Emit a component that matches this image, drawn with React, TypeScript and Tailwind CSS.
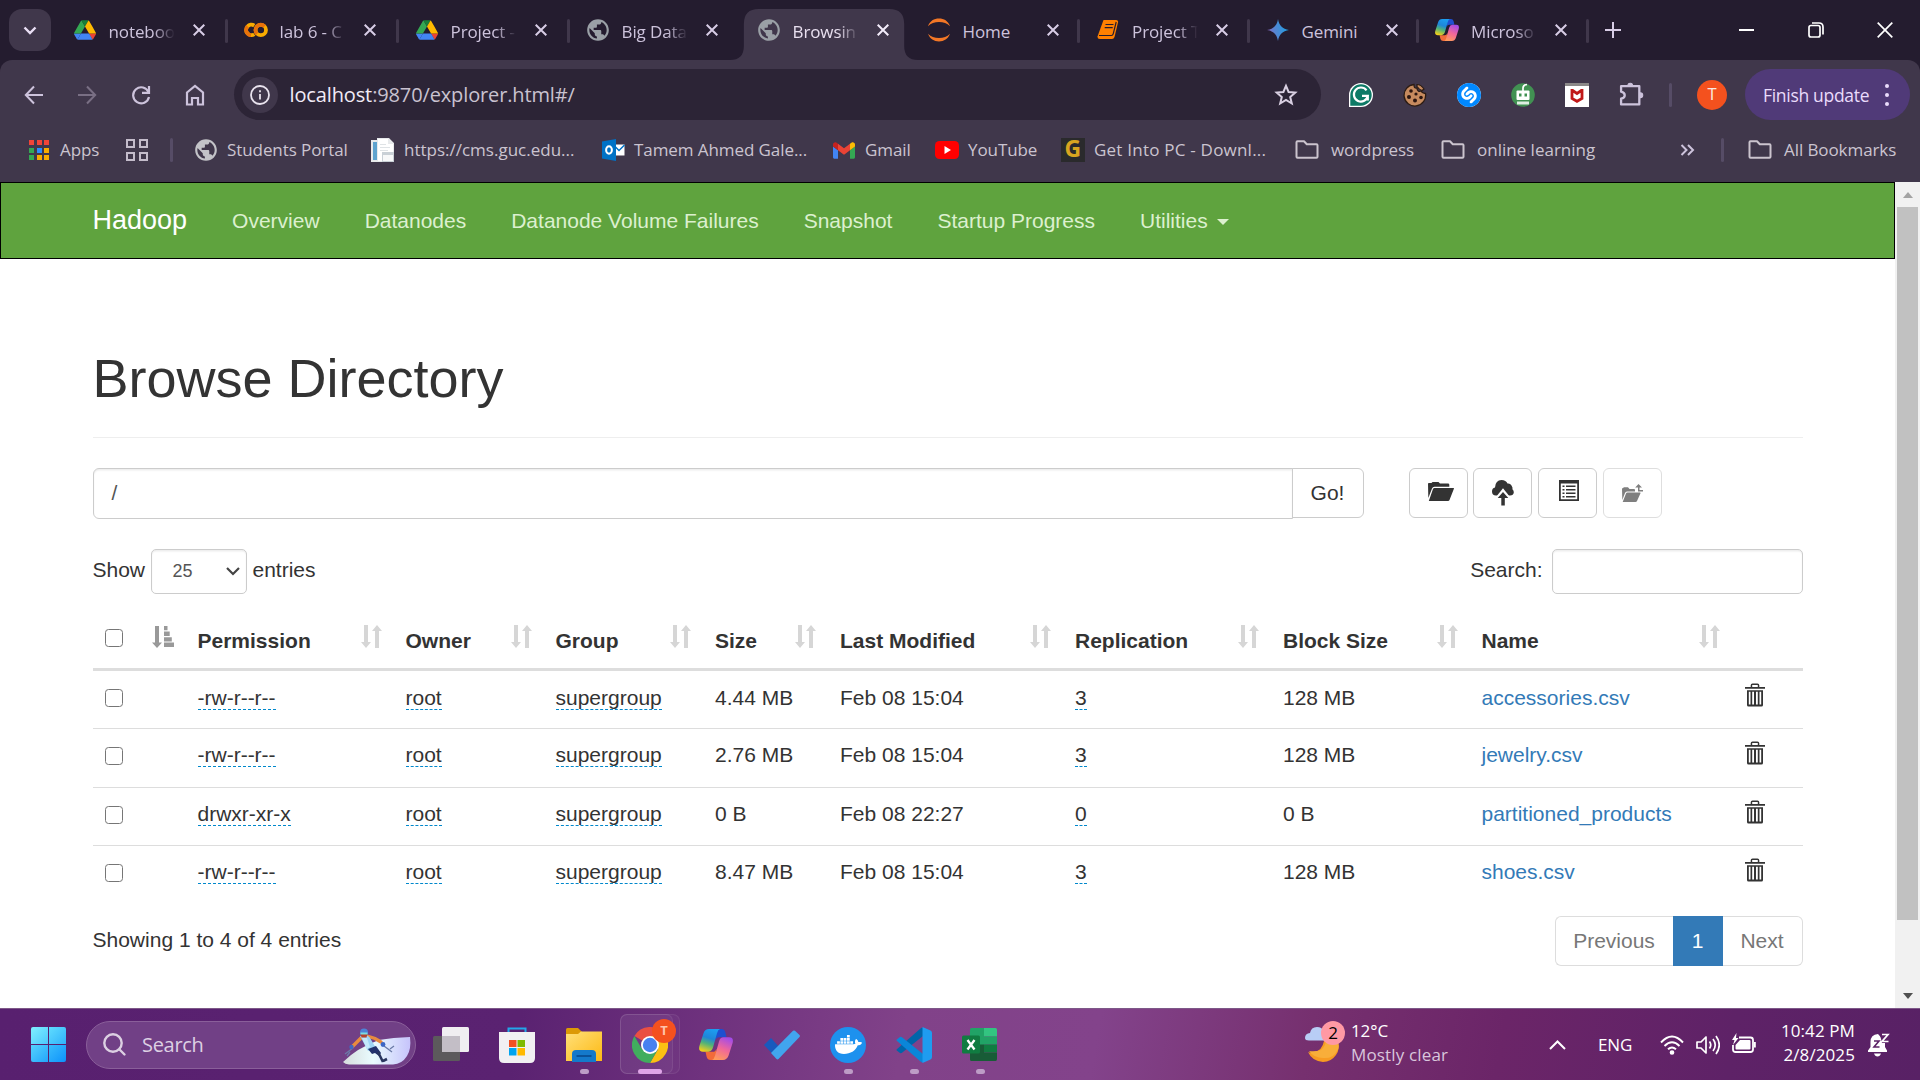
import React from "react";
import { MdPublic } from "react-icons/md";
import { FaDocker } from "react-icons/fa";
import { SiShazam } from "react-icons/si";

/* ---------- logos ---------- */

const Drive = () => (
  <svg viewBox="0 0 87.3 78" className="h-[20px] w-[22px]">
    <path fill="#4285f4" d="m6.6 66.85 3.85 6.65c.8 1.4 1.95 2.5 3.3 3.3l13.75-23.8h-27.5c0 1.55.4 3.1 1.2 4.5z" />
    <path fill="#34a853" d="m43.65 25-13.75-23.8c-1.35.8-2.5 1.9-3.3 3.3l-25.4 44a9.06 9.06 0 0 0 -1.2 4.5h27.5z" />
    <path fill="#ea4335" d="m73.55 76.8c1.35-.8 2.5-1.9 3.3-3.3l1.6-2.75 7.65-13.25c.8-1.4 1.2-2.95 1.2-4.5h-27.502l5.852 11.5z" />
    <path fill="#188038" d="m43.65 25 13.75-23.8c-1.35-.8-2.9-1.2-4.5-1.2h-18.5c-1.6 0-3.15.45-4.5 1.2z" />
    <path fill="#4285f4" d="m59.8 53h-32.3l-13.75 23.8c1.35.8 2.9 1.2 4.5 1.2h50.8c1.6 0 3.15-.45 4.5-1.2z" />
    <path fill="#ffba00" d="m73.4 26.5-12.7-22c-.8-1.4-1.95-2.5-3.3-3.3l-13.75 23.8 16.15 28h27.45c0-1.55-.4-3.1-1.2-4.5z" />
  </svg>
);

const Colab = () => (
  <svg viewBox="0 0 24 16" className="h-[16px] w-[24px]" fill="none" strokeWidth="3.8">
    <path stroke="#f9ab00" d="M10.3 3.6A5.2 5.2 0 1 0 10.3 12.2" />
    <path stroke="#e8710a" d="M3.6 4.4A5.2 5.2 0 0 0 7 13.2" />
    <circle stroke="#f9ab00" cx="16.8" cy="8" r="5.2" />
    <path stroke="#e8710a" d="M13 11.8A5.2 5.2 0 0 1 20.5 4.3" />
  </svg>
);

const Globe = ({ className }: { className: string }) => <MdPublic className={className} />;

const Jupyter = () => (
  <svg viewBox="0 0 24 24" className="h-[26px] w-[24px]" fill="#f37726">
    <path d="M1 8.2C3 3 7 .6 12 .6S21 3 23 8.2C20 5.2 16.5 4 12 4S4 5.2 1 8.2Z" />
    <path d="M1 15.8C3 21 7 23.4 12 23.4S21 21 23 15.8C20 18.8 16.5 20 12 20S4 18.8 1 15.8Z" />
  </svg>
);

const Book = () => (
  <svg viewBox="0 0 22 20" className="h-[20px] w-[22px]">
    <path fill="#ff8000" d="M6.5 0H19q2.5 0 2 2.5L17.5 17q-.6 2-2.5 2H3Q.5 19 .5 16.5Z" />
    <path fill="none" stroke="#241c2f" strokeWidth="1.2" d="M8.5 4.5h8M7.7 7.7h8M2 15.5h12.5q1.3 0 1.7-1.6L19.2 2" />
  </svg>
);

const Gemini = () => (
  <svg viewBox="0 0 24 24" className="h-[22px] w-[22px]">
    <defs>
      <linearGradient id="gem" x1="0" y1=".6" x2="1" y2=".4">
        <stop offset="0" stopColor="#9168c0" />
        <stop offset=".35" stopColor="#5684d1" />
        <stop offset="1" stopColor="#1ba1e3" />
      </linearGradient>
    </defs>
    <path fill="url(#gem)" d="M12 0C13 7 17 11 24 12 17 13 13 17 12 24 11 17 7 13 0 12 7 11 11 7 12 0Z" />
  </svg>
);

const Copilot = ({ className, id }: { className: string; id: string }) => (
  <svg viewBox="0 0 34 30" preserveAspectRatio="none" className={className}>
    <defs>
      <linearGradient id={id + "a"} x1=".6" y1="0" x2=".3" y2="1">
        <stop offset="0" stopColor="#1c9df0" />
        <stop offset=".4" stopColor="#1f86d8" />
        <stop offset=".65" stopColor="#4fb27a" />
        <stop offset="1" stopColor="#f2cf1b" />
      </linearGradient>
      <linearGradient id={id + "b"} x1=".7" y1="0" x2=".3" y2="1">
        <stop offset="0" stopColor="#a34be8" />
        <stop offset=".5" stopColor="#f0679a" />
        <stop offset="1" stopColor="#ff9a5c" />
      </linearGradient>
    </defs>
    <path fill="#1f4fd0" d="M17 0h5.5q3 0 3.8 2.8L27.5 8H20q-2.5 0-3.5 3Z" />
    <path fill="#f26b3a" d="M17 30h-5.5q-3 0-3.8-2.8L6.5 22H14q2.5 0 3.5-3Z" />
    <path fill={"url(#" + id + "a)"} d="M10 0h11q-2 .5-3 4l-4 14q-1.2 4-4.5 4H4q-5 0-3.6-5.5L4.5 4Q6 0 10 0Z" />
    <path fill={"url(#" + id + "b)"} d="M24 30H13q2-.5 3-4l4-14q1.2-4 4.5-4H30q5 0 3.6 5.5L29.5 26Q28 30 24 30Z" />
  </svg>
);

const Gmail = () => (
  <svg viewBox="52 42 88 66" className="h-[17px] w-[22px]">
    <path fill="#4285f4" d="M58 108h14V74L52 59v43c0 3.320 2.690 6 6 6" />
    <path fill="#34a853" d="M120 108h14c3.320 0 6-2.690 6-6V59l-20 15" />
    <path fill="#fbbc04" d="M120 48v26l20-15v-8c0-7.420-8.470-11.650-14.400-7.200" />
    <path fill="#ea4335" d="M72 74V48l24 18 24-18v26L96 92" />
    <path fill="#c5221f" d="M52 51v8l20 15V48l-5.600-4.200c-5.940-4.450-14.400-.22-14.400 7.200" />
  </svg>
);

const Outlook = () => (
  <svg viewBox="0 0 23 22" className="h-[22px] w-[23px]">
    <path fill="#fff" d="M12 5.5h10.5v11H12z" />
    <path fill="none" stroke="#0072c6" strokeWidth="1.5" d="m13 7.5 4 4 5.5-5.5" />
    <path fill="#0072c6" d="M0 2.5 14 0v22L0 19.5Z" />
    <ellipse cx="7" cy="11" rx="2.9" ry="3.7" fill="none" stroke="#fff" strokeWidth="2" />
  </svg>
);

const DocPage = () => (
  <svg viewBox="0 0 24 24" className="h-[24px] w-[24px]">
    <path fill="#e8eaec" d="M0 2h6V0h12l5 5v19H0Z" />
    <path fill="#5ea3cf" d="M2 4h4v18H2z" />
    <path fill="#fff" d="M7 1h10v5h5v17H7Z" />
    <path fill="#dfe3e6" d="M9 6h6v1H9zM9 9h10v1H9zM9 12h8v1H9z" />
    <path fill="#c9d0d6" d="M11 14h12v10H11z" />
    <path fill="#f7f8f9" d="M12 17h10v6H12z" />
  </svg>
);

const Folder = () => (
  <svg viewBox="0 0 24 20" className="h-[20px] w-[24px]" fill="none" stroke="#cbc4ce" strokeWidth="2" strokeLinejoin="round">
    <path d="M1.5 2.2q0-1 1-1H9l2.8 3h9.7q1 0 1 1v11.6q0 1-1 1h-19q-1 0-1-1Z" />
  </svg>
);

/* ---------- tab strip ---------- */

type TabInfo = { icon: React.ReactNode; title: string; width: string; active?: boolean; sep?: boolean; fade?: boolean };

const tabs: TabInfo[] = [
  { icon: <Drive />, title: "noteboo", width: "w-[171px]", sep: true, fade: true },
  { icon: <Colab />, title: "lab 6 - C", width: "w-[171px]", sep: true, fade: true },
  { icon: <Drive />, title: "Project -", width: "w-[171px]", sep: true, fade: true },
  { icon: <Globe className="h-[26px] w-[26px] text-[#9aa0a6]" />, title: "Big Data", width: "w-[171px]", fade: true },
  { icon: <Globe className="h-[26px] w-[26px] text-[#9aa0a6]" />, title: "Browsin", width: "w-[170px]", active: true, fade: true },
  { icon: <Jupyter />, title: "Home", width: "w-[169.5px]", sep: true },
  { icon: <Book />, title: "Project T", width: "w-[169.5px]", sep: true, fade: true },
  { icon: <Gemini />, title: "Gemini", width: "w-[169.5px]", sep: true },
  { icon: <Copilot className="h-[22px] w-[24px]" id="ct" />, title: "Microso", width: "w-[170px]", sep: true, fade: true },
];

const Close = ({ color }: { color: string }) => (
  <svg viewBox="0 0 12 12" className="h-[12px] w-[12px]" fill="none" stroke={color} strokeWidth="2">
    <path d="M.7.7l10.6 10.6M11.3.7.7 11.3" />
  </svg>
);

function Tab({ t }: { t: TabInfo }) {
  return (
    <div className={"relative flex h-[60px] shrink-0 items-start pt-[9px] " + t.width}>
      {t.active && (
        <svg viewBox="0 0 194 51" className="absolute top-[9px] left-[-11.5px] h-[51px] w-[192px]" preserveAspectRatio="none" fill="#40374b">
          <path d="M0 51Q14 51 14 37V15Q14 0 29 0H161Q176 0 176 15V37Q176 51 190 51Z" />
        </svg>
      )}
      <div className="relative flex h-[42px] w-full items-center pl-[14px]">
        <div className="flex w-[26px] justify-center">{t.icon}</div>
        <div
          className={
            "ml-[11px] w-[70px] pt-[3px] text-[17px] tracking-[-0.1px] whitespace-nowrap " +
            (t.active ? "text-[#e9e0f0]" : "text-[#cdc3dc]") +
            (t.fade ? " [mask-image:linear-gradient(to_right,black_64%,transparent_94%)]" : "")
          }
        >
          {t.title}
        </div>
        <div className="ml-[14px]">
          <Close color={t.active ? "#f3ecfa" : "#d8cde6"} />
        </div>
        {t.sep && <div className="absolute top-[10px] right-[1px] h-[24px] w-[3px] rounded bg-[#40374b]" />}
      </div>
    </div>
  );
}

function TabStrip() {
  return (
    <div className="flex h-[60px] bg-[#241c2f]">
      <div className="mt-[9px] ml-[9px] flex h-[42px] w-[42px] items-center justify-center rounded-[13px] bg-[#40374b]">
        <svg viewBox="0 0 14 9" className="h-[9px] w-[14px]" fill="none" stroke="#eadff5" strokeWidth="2.4">
          <path d="m1.5 1.5 5.5 5.5 5.5-5.5" />
        </svg>
      </div>
      <div className="ml-[6.5px] flex">
        {tabs.map((t, i) => (
          <Tab key={i} t={t} />
        ))}
      </div>
      <svg viewBox="0 0 16 16" className="mt-[22px] ml-[15px] h-[16px] w-[16px]" stroke="#d8cde6" strokeWidth="2">
        <path d="M8 0v16M0 8h16" />
      </svg>
      <div className="ml-auto flex w-[208px] items-center">
        <div className="flex w-[69px] justify-center">
          <div className="h-[2px] w-[15px] bg-white" />
        </div>
        <div className="flex w-[69px] justify-center">
          <svg viewBox="0 0 16 16" className="h-[16px] w-[16px]" fill="none" stroke="#fff" strokeWidth="1.7">
            <rect x="1" y="3.5" width="11" height="11.5" rx="2" />
            <path d="M4 1h7q4 0 4 4v7.5" />
          </svg>
        </div>
        <div className="flex w-[69px] justify-center">
          <svg viewBox="0 0 16 16" className="h-[16px] w-[16px]" stroke="#fff" strokeWidth="1.7">
            <path d="M.7.7l14.6 14.6M15.3.7.7 15.3" />
          </svg>
        </div>
      </div>
    </div>
  );
}

/* ---------- toolbar ---------- */

const Slot = ({ children }: { children: React.ReactNode }) => (
  <div className="flex w-[54px] shrink-0 items-center justify-center">{children}</div>
);

function Toolbar() {
  return (
    <div className="bg-[#241c2f]">
      <div className="flex h-[69px] items-center rounded-t-[12px] bg-[#40374b] pl-[7px]">
        <Slot>
          <svg viewBox="0 0 20 20" className="h-[20px] w-[20px]" fill="none" stroke="#cdc3dc" strokeWidth="2">
            <path d="M19 10H2M10 1.5 1.8 10l8.2 8.5" />
          </svg>
        </Slot>
        <Slot>
          <svg viewBox="0 0 20 20" className="mr-[2px] h-[20px] w-[20px]" fill="none" stroke="#796f84" strokeWidth="2">
            <path d="M1 10h17M10 1.5l8.2 8.5-8.2 8.5" />
          </svg>
        </Slot>
        <Slot>
          <svg viewBox="0 0 20 20" className="mr-[2px] h-[20px] w-[20px]" fill="none" stroke="#cdc3dc" strokeWidth="2.2">
            <path d="M17.6 7.3A8 8 0 1 0 18 12" />
            <path d="M18 1v6.8h-7" />
          </svg>
        </Slot>
        <Slot>
          <svg viewBox="0 0 20 22" className="mr-[2px] h-[22px] w-[20px]" fill="none" stroke="#cdc3dc" strokeWidth="2.2">
            <path d="M2 8.5 10 2l8 6.5v12h-5V14H7v6.5H2Z" />
          </svg>
        </Slot>
        <div className="ml-[11px] flex h-[51px] w-[1087px] shrink-0 items-center rounded-full bg-[#2c2436] pl-[8px]">
          <div className="flex h-[36px] w-[36px] items-center justify-center rounded-full bg-[#40374b]">
            <svg viewBox="0 0 20 20" className="h-[20px] w-[20px]" fill="none" stroke="#e9e3ee" strokeWidth="1.8">
              <circle cx="10" cy="10" r="9" />
              <path d="M10 9v5.5M10 5.2v2" />
            </svg>
          </div>
          <div className="ml-[11.5px] text-[20px] tracking-[-0.13px] text-[#c9c2d0]">
            <span className="text-[#f1ebf6]">localhost</span>:9870/explorer.html#/
          </div>
          <svg viewBox="0 0 24 24" className="mr-[23px] ml-auto h-[24px] w-[24px]" fill="none" stroke="#d9d0e2" strokeWidth="2" strokeLinejoin="miter">
            <path d="m12 2.8 2.6 6.2 6.7.6-5.1 4.4 1.6 6.5-5.8-3.5-5.8 3.5 1.6-6.5L2.7 9.6l6.7-.6Z" />
          </svg>
        </div>
        <div className="ml-[13px] flex">
          <Slot>
            <svg viewBox="0 0 24 24" className="h-[24px] w-[24px]">
              <path d="M12 0a12 12 0 0 1 0 24H0V12A12 12 0 0 1 12 0Z" fill="#fff" />
              <path d="M12 1.3a10.7 10.7 0 0 1 0 21.4H1.3V12A10.7 10.7 0 0 1 12 1.3Z" fill="#0d7a66" />
              <path d="M17.5 7.3A7 7 0 1 0 18.8 12.8H13M18.8 12.5v5" fill="none" stroke="#fff" strokeWidth="2.2" />
            </svg>
          </Slot>
          <Slot>
            <svg viewBox="0 0 24 24" className="h-[24px] w-[24px]">
              <path d="M11 1.5c0 3 1 4 3 3.5 0 3 2 4 4 3 1 2 2.5 2 4.5 2.5A10.8 10.8 0 1 1 11 1.5Z" fill="#c68a5e" stroke="#2c1c14" strokeWidth="1.3" />
              <g fill="#2c1610">
                <circle cx="8" cy="8" r="1.8" />
                <circle cx="13" cy="11" r="1.6" />
                <circle cx="6" cy="14" r="2" />
                <circle cx="12" cy="17.5" r="2" />
                <circle cx="18" cy="14.5" r="1.8" />
              </g>
              <path d="M14 1.5q4 0 7 4.500l-2 1.500q-3-1-5-4Z" fill="#c68a5e" stroke="#2c1c14" strokeWidth="1.2" />
            </svg>
          </Slot>
          <Slot>
            <div className="h-[24px] w-[24px] rounded-full bg-white">
              <SiShazam className="h-[24px] w-[24px] text-[#0088ff]" />
            </div>
          </Slot>
          <Slot>
            <svg viewBox="0 0 24 24" className="h-[24px] w-[24px]">
              <circle cx="12" cy="12" r="11.8" fill="#419152" />
              <path d="M12 8V5q0-3 4-3.500" fill="none" stroke="#fff" strokeWidth="1.7" />
              <rect x="5.5" y="7.5" width="13" height="9.500" rx="1" fill="#fff" />
              <path d="M8 10.5h2.5v3H8zM13.5 10.5H16v3h-2.500z" fill="#419152" />
              <path d="M6 18.5h12v3H6z" fill="#dfeee2" />
            </svg>
          </Slot>
          <Slot>
            <div className="flex h-[24px] w-[24px] items-center justify-center border-t-[3px] border-[#8b8888] bg-white">
              <svg viewBox="0 0 14 14" className="h-[14px] w-[14px]" fill="none" stroke="#c01818" strokeWidth="2.8">
                <path d="M2 1v8.5l5 2.800 5-2.800V1L7 4.500Z" />
              </svg>
            </div>
          </Slot>
          <Slot>
            <svg viewBox="0 0 24 24" className="h-[25px] w-[25px]" fill="none" stroke="#cdc3dc" strokeWidth="2.2" strokeLinejoin="round">
              <path d="M2 4h17.5v17.5H2v-5.500q3.500-.7 3.500-3.300T2 9.300Z" />
              <path d="M8.500 3.500a2.300 2.300 0 0 1 4.600 0ZM20.500 10.400a2.300 2.300 0 0 1 0 4.600Z" fill="#cdc3dc" strokeWidth="1" />
            </svg>
          </Slot>
        </div>
        <div className="ml-[11px] h-[24px] w-[3px] rounded bg-[#564c66]" />
        <div className="ml-[25px] flex h-[30px] w-[30px] items-center justify-center rounded-full bg-[#f4511e] text-[16.500px] text-[#fbe9e2]">T</div>
        <div className="ml-[18px] flex h-[51px] w-[165px] items-center rounded-full bg-[#503a78] pl-[18px] text-[17.500px] text-[#eadcfc]">
          <div className="w-[118px] pt-px tracking-[-0.3px] whitespace-nowrap">Finish update</div>
          <div className="ml-[4px] flex flex-col gap-[5px]">
            <div className="h-[4px] w-[4px] rounded-full bg-[#eadcfc]" />
            <div className="h-[4px] w-[4px] rounded-full bg-[#eadcfc]" />
            <div className="h-[4px] w-[4px] rounded-full bg-[#eadcfc]" />
          </div>
        </div>
      </div>
    </div>
  );
}

/* ---------- bookmarks bar ---------- */

const appDots = [
  "bg-[#f04438]",
  "bg-[#f04438]",
  "bg-[#f04438]",
  "bg-[#34a853]",
  "bg-[#2a8cff]",
  "bg-[#f9ab00]",
  "bg-[#34a853]",
  "bg-[#f9ab00]",
  "bg-[#f9ab00]",
];

function Bookmark({ icon, label, className }: { icon: React.ReactNode; label: string; className: string }) {
  return (
    <div className={"flex shrink-0 items-center whitespace-nowrap " + className}>
      <div className="flex w-[24px] shrink-0 justify-center">{icon}</div>
      <span className="ml-[9px]">{label}</span>
    </div>
  );
}

function BookmarksBar() {
  return (
    <div className="flex h-[53px] items-center bg-[#40374b] pb-[11px] pl-[29px] text-[17px] tracking-[-0.08px] text-[#cbc4d0]">
      <div className="grid w-[20px] grid-cols-3 gap-[2.500px]">
        {appDots.map((c, i) => (
          <div key={i} className={"h-[5px] w-[5px] " + c} />
        ))}
      </div>
      <div className="ml-[11px] w-[66px]">Apps</div>
      <div className="grid w-[22px] grid-cols-2 gap-[4px]">
        {[0, 1, 2, 3].map((i) => (
          <div key={i} className="h-[9px] w-[9px] border-2 border-[#c4bccb]" />
        ))}
      </div>
      <div className="ml-[22px] h-[24px] w-[3px] rounded bg-[#564c66]" />
      <Bookmark className="ml-[21px] w-[177px]" icon={<Globe className="h-[26px] w-[26px] shrink-0 text-[#c3c3c8]" />} label="Students Portal" />
      <Bookmark className="w-[230px] tracking-[0px]" icon={<DocPage />} label="https://cms.guc.edu..." />
      <Bookmark className="w-[231px]" icon={<Outlook />} label="Tamem Ahmed Gale..." />
      <Bookmark className="w-[103px]" icon={<Gmail />} label="Gmail" />
      <Bookmark
        className="w-[126px]"
        icon={
          <svg viewBox="0 0 24 18" className="h-[18px] w-[24px]">
            <rect width="24" height="18" rx="4.500" fill="#f00" />
            <path d="m9.500 5 6.500 4-6.500 4Z" fill="#fff" />
          </svg>
        }
        label="YouTube"
      />
      <Bookmark
        className="w-[234px] tracking-[0.22px]"
        icon={<div className="flex h-[24px] w-[24px] items-center justify-center bg-[#2a2a2c] pb-[3px] text-[23px] leading-none font-bold text-[#d9a520]">G</div>}
        label="Get Into PC - Downl..."
      />
      <Bookmark className="w-[146px] [&>span]:ml-[12px]" icon={<Folder />} label="wordpress" />
      <Bookmark className="w-[239px] tracking-[0px] [&>span]:ml-[12px]" icon={<Folder />} label="online learning" />
      <svg viewBox="0 0 15 12" className="h-[12px] w-[15px] shrink-0" fill="none" stroke="#cdc3dc" strokeWidth="2">
        <path d="m1.500 1 5 5-5 5M8 1l5 5-5 5" />
      </svg>
      <div className="ml-[26px] h-[24px] w-[3px] shrink-0 rounded bg-[#564c66]" />
      <Bookmark className="ml-[24px] [&>span]:ml-[12px]" icon={<Folder />} label="All Bookmarks" />
    </div>
  );
}

/* ---------- page ---------- */

function NavBar() {
  return (
    <div className="flex h-[77px] items-center border border-black bg-[#5fa33e] pl-[91.500px] text-[21px] text-[#dcf0cf]">
      <span className="mr-[45px] text-[27px] text-white">Hadoop</span>
      <div className="flex gap-[45px]">
        <span>Overview</span>
        <span>Datanodes</span>
        <span>Datanode Volume Failures</span>
        <span>Snapshot</span>
        <span>Startup Progress</span>
        <span className="flex items-center">
          Utilities
          <span className="mt-[2px] ml-[9px] h-0 w-0 border-x-[6px] border-t-[6px] border-x-transparent border-t-[#dcf0cf]" />
        </span>
      </div>
    </div>
  );
}

const toolBtn = "flex h-[50px] w-[59px] items-center justify-center rounded-[6px] border border-[#ccc] bg-white";

const SortBoth = () => (
  <svg viewBox="0 0 21 23" className="absolute right-[12px] bottom-[20px] h-[23px] w-[21px]" fill="#d6d6d6">
    <path d="M3 0h4v17h3L5 23 0 17h3zM14 23h4V6h3L16 0 11 6h3z" />
  </svg>
);

const SortActive = () => (
  <svg viewBox="0 0 22 22" className="absolute right-[12px] bottom-[20px] h-[22px] w-[22px]" fill="#999">
    <path d="M3 0h4v16.500h3L5 22 0 16.500h3zM12 0h3.500v4.300H12zM12 5.600h5.700v4.300H12zM12 11.200h7.800v4.200H12zM12 16.500h10v4.500H12z" />
  </svg>
);

const Trash = () => (
  <svg viewBox="0 0 20 24" className="h-[24px] w-[20px]" fill="#333">
    <path d="M0 4h5.700V2.200Q5.700.5 7.500.5h5q1.800 0 1.800 1.700V4H20v1.800H0ZM7.200 4h5.600V2.100H7.200Z" />
    <path fillRule="evenodd" d="M2 7.200h16V22q0 1.500-1.500 1.500h-13Q2 23.500 2 22ZM3.800 8.800v12.700h1.700V8.800ZM7.200 8.800v12.700H9V8.800ZM11 8.800v12.700h1.800V8.800ZM14.500 8.800v12.700h1.700V8.800Z" />
  </svg>
);

const Check = () => <div className="h-[18px] w-[18px] rounded-[3.500px] border-[1.500px] border-[#767676] bg-white" />;

const cols = "grid grid-cols-[93px_208px_150px_159.500px_125px_235px_208px_198.500px_262.500px_70.500px]";

const rows = [
  ["-rw-r--r--", "root", "supergroup", "4.44 MB", "Feb 08 15:04", "3", "128 MB", "accessories.csv"],
  ["-rw-r--r--", "root", "supergroup", "2.76 MB", "Feb 08 15:04", "3", "128 MB", "jewelry.csv"],
  ["drwxr-xr-x", "root", "supergroup", "0 B", "Feb 08 22:27", "0", "0 B", "partitioned_products"],
  ["-rw-r--r--", "root", "supergroup", "8.47 MB", "Feb 08 15:04", "3", "128 MB", "shoes.csv"],
];

const headers = ["Permission", "Owner", "Group", "Size", "Last Modified", "Replication", "Block Size", "Name"];

function FileTable() {
  return (
    <div className="w-[1710px]">
      <div className={cols + " h-[62px] border-b-[3px] border-[#ddd] font-bold"}>
        <div className="relative pt-[20px] pl-[12px]">
          <Check />
          <SortActive />
        </div>
        {headers.map((h) => (
          <div key={h} className="relative pt-[17px] pl-[12px] leading-[30px]">
            {h}
            <SortBoth />
          </div>
        ))}
        <div />
      </div>
      {rows.map((r, i) => (
        <div key={i} className={cols + " leading-[30px] " + (i > 0 ? "h-[58.500px] border-t border-[#ddd]" : "h-[57px]")}>
          <div className="pt-[18px] pl-[12px]">
            <Check />
          </div>
          {r.map((c, j) => (
            <div key={j} className={"pl-[12px] whitespace-nowrap " + (i > 0 ? "pt-[11px]" : "pt-[12px]")}>
              {[0, 1, 2, 5].includes(j) ? (
                <span className="inline-block h-[27px] border-b border-dashed border-[#0088cc]">{c}</span>
              ) : (
                <span className={j === 7 ? "text-[#337ab7]" : ""}>{c}</span>
              )}
            </div>
          ))}
          <div className="pt-[12px] pl-[13px]">
            <Trash />
          </div>
        </div>
      ))}
    </div>
  );
}

function Page() {
  return (
    <div className="flex h-[826px] bg-white">
      <div className="flex w-[1895px] flex-col font-['Liberation_Sans',Arial,sans-serif] text-[21px] text-[#333]">
        <NavBar />
        <div className="flex flex-col pl-[92.500px]">
          <h1 className="mt-[89px] h-[90px] w-[1710px] border-b border-[#eee] text-[54px] leading-[60px]">Browse Directory</h1>
          <div className="mt-[30px] flex h-[51px]">
            <div className="flex h-[51px] w-[1200px] items-center rounded-l-[6px] border border-[#ccc] pb-[2px] pl-[18px] text-[#555] shadow-[inset_0_1.500px_1.500px_rgba(0,0,0,0.075)]">/</div>
            <div className="-ml-px flex h-[50px] w-[72px] items-center justify-center rounded-r-[6px] border border-[#ccc]">Go!</div>
            <div className="ml-[45px] flex gap-[5.700px]">
              <div className={toolBtn}>
                <svg viewBox="0 0 26 19" className="mr-[-5px] mb-[3px] h-[19px] w-[26px]" fill="#333">
                  <path d="M0 1.500Q0 1 1 1h2.500L4.500 0h6l1.500 1.500h8q1.300 0 1.300 1.300v2H6.500q-1.800 0-2.500 1.700L.3 16Z" />
                  <path d="M6.500 6H25.500q.7 0 .4.700L21.500 18q-.3 1-1.500 1H.800L5 7q.4-1 1.500-1Z" />
                </svg>
              </div>
              <div className={toolBtn}>
                <svg viewBox="0 0 22 26" className="mb-[0px] h-[26px] w-[22px]">
                  <path fill="#333" d="M4 15.500Q0 15.500 0 11.500 0 8 3 7.500 3.500 0 9.500 0q4.500 0 6 3.500Q18 3 19.500 5.500t.8 3.500Q22 10.500 21.800 12.500 21.500 15.500 18 15.500Z" />
                  <path fill="#fff" d="M11 8.200 18 17H4Z" />
                  <path fill="#333" d="m11 12 5.300 6h-3.500V25.500H9.300V18H5.700Z" />
                </svg>
              </div>
              <div className={toolBtn}>
                <svg viewBox="0 0 20 21" className="mr-[-3px] mb-[6px] h-[21px] w-[20px]">
                  <path fill="#333" fillRule="evenodd" d="M0 0h20v21H0ZM1.800 3.500v15.700h16.400V3.500Z" />
                  <path fill="#333" d="M3.500 5.500h2V7h-2zM7 5.500h9.500V7H7zM3.500 9h2v1.500h-2zM7 9h9.500v1.500H7zM3.500 12.500h2V14h-2zM7 12.500h9.500V14H7zM3.500 16h2v1.500h-2zM7 16h9.500v1.500H7z" />
                </svg>
              </div>
              <div className="flex h-[50px] w-[59px] items-center justify-center rounded-[6px] border border-[#dedede] bg-white">
                <svg viewBox="0 0 21 18" className="h-[18px] w-[21px]" fill="#7f7f7f">
                  <path d="M0 5q0-1 1-1l1-.8h4L7.500 5H12q1 0 1 1v1.500H5Q3.500 7.500 3 9L.3 16Z" />
                  <path d="M5.500 8.500H18q.7 0 .5.700L15 17q-.4 1-1.500 1H.700L4 9.500q.4-1 1.500-1Z" />
                  <path d="M16.500 0 20 3.500h-2.500V6H21v1.500h-5V3.500h-2.800Z" />
                </svg>
              </div>
            </div>
          </div>
          <div className="mt-[30px] flex h-[45px] w-[1710px] items-center">
            <span className="w-[58px] pb-[3px]">Show</span>
            <div className="flex h-[45px] w-[96px] items-center rounded-[5px] border border-[#ccc] pl-[21px] text-[18px] text-[#555] shadow-[inset_0_1.500px_1.500px_rgba(0,0,0,0.075)]">
              25
              <svg viewBox="0 0 14 9" className="mr-[6px] ml-auto h-[9px] w-[14px]" fill="none" stroke="#444" strokeWidth="2.200">
                <path d="m1 1 6 6 6-6" />
              </svg>
            </div>
            <span className="ml-[6px] pb-[3px]">entries</span>
            <span className="ml-auto pb-[3px]">Search:</span>
            <div className="ml-[9px] h-[45px] w-[251px] rounded-[5px] border border-[#ccc] shadow-[inset_0_1.500px_1.500px_rgba(0,0,0,0.075)]" />
          </div>
          <div className="mt-[15px]">
            <FileTable />
          </div>
          <div className="mt-[12.500px] flex w-[1710px] justify-between">
            <span className="pt-[12px] leading-[24px]">Showing 1 to 4 of 4 entries</span>
            <div className="flex h-[50px] text-[#777]">
              <div className="flex w-[118px] items-center justify-center rounded-l-[6px] border border-r-0 border-[#ddd]">Previous</div>
              <div className="flex w-[50px] items-center justify-center bg-[#337ab7] text-white">1</div>
              <div className="flex w-[80px] items-center justify-center rounded-r-[6px] border border-l-0 border-[#ddd]">Next</div>
            </div>
          </div>
        </div>
      </div>
      <div className="flex w-[25px] flex-col items-center bg-[#f1f1f1] pt-[10px]">
        <div className="h-0 w-0 border-x-[5px] border-b-[6px] border-x-transparent border-b-[#a3a3a3]" />
        <div className="mt-[9px] h-[713px] w-[21px] bg-[#c1c1c1]" />
        <div className="mt-[73px] h-0 w-0 border-x-[5.500px] border-t-[6px] border-x-transparent border-t-[#505050]" />
      </div>
    </div>
  );
}

/* ---------- taskbar ---------- */

function Launcher({ children, w, running }: { children: React.ReactNode; w: string; running?: boolean }) {
  return (
    <div className={"relative flex h-[72px] shrink-0 items-center justify-center " + w}>
      {children}
      {running && <div className="absolute bottom-[7px] left-1/2 ml-[-4.500px] h-[5px] w-[9px] rounded-full bg-[#bd9cc6]" />}
    </div>
  );
}

function Skier() {
  return (
    <svg viewBox="0 0 70 38" className="h-[38px] w-[70px]">
      <defs>
        <linearGradient id="snow" x1="0" y1="0" x2="1" y2="0">
          <stop offset="0" stopColor="#d6dcdc" />
          <stop offset=".45" stopColor="#eafcff" />
          <stop offset="1" stopColor="#c6c3fb" />
        </linearGradient>
      </defs>
      <path fill="url(#snow)" d="M0 34Q14 20 36 12 50 9.500 67 9q1.500 12-3 19-5 8-14 8.500H6Q2 36 0 34Z" />
      <path fill="none" stroke="#6b7ba8" strokeWidth="1.300" d="M2 26l8-6M41 18l8 6M47 21l4-3M4 28l3-4" />
      <path fill="none" stroke="#e88b3e" strokeWidth="3.400" strokeLinecap="round" d="M18 10l-6 6-3 3M24 8l8 2.500 6 3.500" />
      <path fill="#9fd4f5" d="M17 8q7-3 10 2l6 10-8 3Z" />
      <path fill="#c4e8fb" d="M19 10h5l3 9-3 2Z" />
      <path fill="#23336e" d="m25 21 8-3 5 7-2 3-4-3-3 1Z" />
      <path fill="none" stroke="#2a3760" strokeWidth="2.600" d="M35 24l5 10M40 33l4-2" />
      <circle cx="21" cy="4.500" r="4" fill="#4e83d6" />
      <path fill="#b5432c" d="M17.500 6h7l-1 3.500h-5Z" />
      <path fill="#7bdce0" d="M17.500 4.500h7v2h-7z" />
      <circle cx="8.500" cy="19" r="2.200" fill="#3d67c4" />
      <circle cx="40" cy="16.500" r="2.400" fill="#3d67c4" />
    </svg>
  );
}

function Chrome() {
  return (
    <svg viewBox="0 0 48 48" className="h-[36px] w-[36px]">
      <path fill="#ea4335" d="M24 24 3.200 12A24 24 0 0 1 44.800 12H24Z" />
      <path fill="#fbbc04" d="M24 12h20.800A24 24 0 0 1 24 48l10.400-18Z" />
      <path fill="#34a853" d="M3.200 12 13.600 30 24 36h4.500L24 48A24 24 0 0 1 3.200 12Z" />
      <path fill="#34a853" d="M13.600 30 24 36l10.400-6L24 48Z" />
      <circle cx="24" cy="24" r="12" fill="#fff" />
      <circle cx="24" cy="24" r="9.600" fill="#3b78f0" />
    </svg>
  );
}

function Taskbar() {
  return (
    <div className="relative flex h-[72px] items-center border-t border-[#7d5888] bg-[linear-gradient(100deg,#58206f_0%,#5a2271_27%,#6f327e_37%,#814289_47%,#83438b_57%,#76306f_68%,#6b2568_78%,#5e2267_90%,#582165_100%)]">
      <div className="ml-[31px] grid w-[35px] grid-cols-2 gap-px">
        <div className="h-[17px] rounded-tl-[2px] bg-gradient-to-br from-[#80f0ff] to-[#4bc8fc]" />
        <div className="h-[17px] rounded-tr-[2px] bg-gradient-to-br from-[#5fdcfe] to-[#2fb2fb]" />
        <div className="h-[17px] rounded-bl-[2px] bg-gradient-to-br from-[#54d2fd] to-[#22a5fb]" />
        <div className="h-[17px] rounded-br-[2px] bg-gradient-to-br from-[#38bcfc] to-[#0b92fb]" />
      </div>
      <div className="ml-[20px] flex h-[48px] w-[330px] items-center rounded-full border border-[#8a5f9a] bg-[#714086] pl-[16px]">
        <svg viewBox="0 0 24 24" className="h-[24px] w-[24px]" fill="none" stroke="#dcd0e2" strokeWidth="2.400" strokeLinecap="round">
          <circle cx="10" cy="10" r="8.700" />
          <path d="m16.500 16.500 5 5" />
        </svg>
        <span className="ml-[15px] text-[20px] tracking-[-0.3px] text-[#ddd0e3]">Search</span>
        <div className="mt-[5px] mr-[2px] ml-auto">
          <Skier />
        </div>
      </div>
      <Launcher w="ml-[3px] w-[66px]">
        <svg viewBox="0 0 36 34" className="mr-[2px] mb-[2px] h-[34px] w-[36px]">
          <rect y="9" width="27" height="25" rx="1.500" fill="#5c5a5c" />
          <rect x="9" width="27" height="25" rx="1.500" fill="#f0eef1" />
          <path d="M9 9h18v16H9z" fill="#c3bec6" />
        </svg>
      </Launcher>
      <Launcher w="w-[66px]">
        <svg viewBox="0 0 36 36" className="mr-[2px] h-[36px] w-[36px]">
          <path d="M9.500 8V1.500h17V8" fill="none" stroke="#22a7ea" strokeWidth="2" />
          <path d="M0 5h36v26q0 5-5 5H5q-5 0-5-5Z" fill="#f1f0f2" />
          <path fill="#f25022" d="M10 13h7.500v7H10z" />
          <path fill="#7fba00" d="M18.500 13H26v7h-7.500z" />
          <path fill="#00a4ef" d="M10 21h7.500v7.500H10z" />
          <path fill="#ffb900" d="M18.500 21H26v7.500h-7.500z" />
        </svg>
      </Launcher>
      <Launcher w="w-[66px]" running>
        <svg viewBox="0 0 36 34" className="h-[34px] w-[36px]">
          <defs>
            <linearGradient id="fold" x1="0" y1="0" x2="1" y2="1">
              <stop offset="0" stopColor="#ffe07a" />
              <stop offset="1" stopColor="#fdb913" />
            </linearGradient>
          </defs>
          <path d="M0 1.500Q0 0 1.500 0H12l3.500 3.500V10H0Z" fill="#dc9a06" />
          <path d="M0 6h12l3-2.500h21V33H0Z" fill="url(#fold)" />
          <path d="M6 34V26q0-4 4-4h16q4 0 4 4v8Z" fill="#1479cb" />
          <path d="M10.500 28h15" stroke="#0a4f94" strokeWidth="1.800" />
        </svg>
      </Launcher>
      <div className="relative flex h-[72px] w-[66px] shrink-0 items-center justify-center">
        <div className="absolute top-[5px] left-[3px] h-[60px] w-[60px] rounded-[7px] border border-white/7 bg-white/3" />
        <div className="absolute top-[5px] left-[3px] h-[60px] w-[53px] rounded-[7px] border border-white/7 bg-white/4" />
        <Chrome />
        <div className="absolute top-[10px] left-[35px] flex h-[24px] w-[24px] items-center justify-center rounded-full bg-[#f4511e] text-[13px] font-bold text-[#ffc3ab]">T</div>
        <div className="absolute bottom-[7px] left-[21px] h-[5px] w-[24px] rounded-full bg-[#e0a4e8]" />
      </div>
      <Launcher w="w-[66px]">
        <Copilot className="h-[31px] w-[34px]" id="cb" />
      </Launcher>
      <Launcher w="w-[66px]">
        <svg viewBox="0 0 36 30" className="h-[30px] w-[36px]">
          <path d="M0 15 7 8l10 11-6.500 7Z" fill="#185abd" />
          <path d="M7 23 29 .8q1-.8 2 0L35.500 5q.8 1 0 2L14.500 29q-1 .8-2 0Z" fill="#41a5ee" />
        </svg>
      </Launcher>
      <Launcher w="w-[66px]" running>
        <div className="flex h-[36px] w-[36px] items-center justify-center rounded-full bg-[#1d91ee]">
          <FaDocker className="h-[27px] w-[27px] text-white" />
        </div>
      </Launcher>
      <Launcher w="w-[66px]" running>
        <svg viewBox="0 0 36 36" className="h-[36px] w-[36px]">
          <path fill="#0065a9" d="M.8 12.500 4 10q1-.6 2 .2L27 27v8.500q-1.500 0-2.500-1L.8 13.800q-.8-.7 0-1.300Z" transform="matrix(1 0 0 -1 0 36)" />
          <path fill="#0a86d8" d="M.8 12.500 4 10q1-.6 2 .2L27 27v8.500q-1.500 0-2.500-1L.8 13.800q-.8-.7 0-1.300Z" />
          <path fill="#1f9cf0" d="m26.500 0 8 3.500Q36 4.300 36 6v24q0 1.700-1.500 2.500L26.500 36Z" />
        </svg>
      </Launcher>
      <Launcher w="w-[66px]" running>
        <svg viewBox="0 0 35 33" className="mr-[2px] h-[33px] w-[35px]">
          <path fill="#21a366" d="M8 1.500Q8 0 9.500 0H22v17H8Z" />
          <path fill="#33c481" d="M22 0h11.500Q35 0 35 1.500V8.500H22z" />
          <path fill="#21a366" d="M22 8.500h13v8H22z" />
          <path fill="#107c41" d="M22 16.500h13v8H22z" />
          <path fill="#185c37" d="M8 16.500h14v8h13V31q0 2-1.500 2h-24Q8 33 8 31.500Z" />
          <rect y="7.500" width="18" height="18" rx="1.500" fill="#107c41" />
          <path d="m5.500 12 7 9.500M12.500 12l-7 9.500" stroke="#fff" strokeWidth="2.300" />
        </svg>
      </Launcher>

      <div className="ml-[291px] flex items-center pb-[1px]">
        <div className="relative h-[44px] w-[42px]">
          <svg viewBox="0 0 42 44" className="h-[44px] w-[42px]">
            <path d="M4 30q2 1 6 0 8-1 10-11l14 1q2 8-2 13-5 7-13 7-11-1-15-10Z" fill="#f79b22" />
            <path d="M5 29q6 1 12-1 4-3 5-9l12 1q2 6-1 9-4 8-14 7-9 0-14-7Z" fill="#f8ae3a" />
            <path d="M1 16q0-4.500 5-5 1-6 7-6 5 0 6.500 4Q24 9 24 18.500H5Q1 18.500 1 16Z" fill="#b8cdf5" />
          </svg>
          <div className="absolute top-[-1px] left-[17px] flex h-[24px] w-[24px] items-center justify-center rounded-full bg-[#ff99a4] text-[17px] text-black">2</div>
        </div>
        <div className="mb-[2px] ml-[5px] flex w-[190px] flex-col text-[17px] leading-[24px] tracking-[0.15px]">
          <span className="tracking-[-0.1px] text-white">12°C</span>
          <span className="text-[#d9c6dc]">Mostly clear</span>
        </div>
      </div>
      <svg viewBox="0 0 17 10" className="ml-[8px] h-[10px] w-[17px]" fill="none" stroke="#fff" strokeWidth="2">
        <path d="m1 9 7.500-7.500L16 9" />
      </svg>
      <span className="ml-[32px] w-[62px] text-[17px] tracking-[-0.1px] text-white">ENG</span>
      <svg viewBox="0 0 24 20" className="h-[20px] w-[24px]" fill="none" stroke="#fff" strokeWidth="1.900">
        <path d="M1 7.500Q12-4.500 23 7.500M4.500 11Q12 3.500 19.500 11M8 14.300q4-3.800 8 0" />
        <circle cx="12" cy="17.500" r="1.400" fill="#fff" />
      </svg>
      <svg viewBox="0 0 24 20" className="ml-[12px] h-[20px] w-[24px]" fill="none" stroke="#fff" strokeWidth="1.700" strokeLinejoin="round">
        <path d="M1 7h4l5-5v16l-5-5H1ZM13.500 6.500q2.500 3.500 0 7M17 4q4.500 6 0 12M20 1q6.500 9 0 18" />
      </svg>
      <svg viewBox="0 0 25 20" className="mb-[3px] ml-[11px] h-[20px] w-[25px]">
        <path d="M8 4.500h11.500q2.500 0 2.500 2.500v9.500q0 2.500-2.500 2.500h-15Q2 19 2 16.500V12" fill="none" stroke="#fff" strokeWidth="1.800" />
        <path d="M9 7h9.500q1 0 1 1v7.500q0 1-1 1h-13q-1 0-1-1V12ZM23 9h1.800v5.500H23z" fill="#fff" />
        <path d="M5.500 0 1 7h2.500L2 12l5.500-7H5Z" fill="#fff" />
      </svg>
      <div className="mb-[3px] ml-[18px] flex w-[81px] flex-col items-end text-[17px] leading-[24px] tracking-[0.1px] whitespace-nowrap text-white">
        <span>10:42 PM</span>
        <span>2/8/2025</span>
      </div>
      <svg viewBox="0 0 22 24" className="ml-[13px] h-[24px] w-[22px]">
        <path d="M10 1Q2.500 1.500 2.500 9v5L0 17.500V19h19v-1.500L17 14V9ZM6 20.500h7q-1 3-3.500 3T6 20.500Z" fill="#fff" />
        <path d="M6 8h5l-5 6h5.500" fill="none" stroke="#5c2266" strokeWidth="1.600" />
        <path d="M11.500 0H22v10h-8Z" fill="#5c2266" />
        <path d="M14 1.500h6l-6 7h6.500" fill="none" stroke="#fff" strokeWidth="1.700" />
      </svg>
    </div>
  );
}

export default function App() {
  return (
    <div className="flex h-[1080px] w-[1920px] flex-col overflow-hidden bg-white font-['Open_Sans','Noto_Sans',sans-serif]">
      <TabStrip />
      <Toolbar />
      <BookmarksBar />
      <Page />
      <Taskbar />
    </div>
  );
}
